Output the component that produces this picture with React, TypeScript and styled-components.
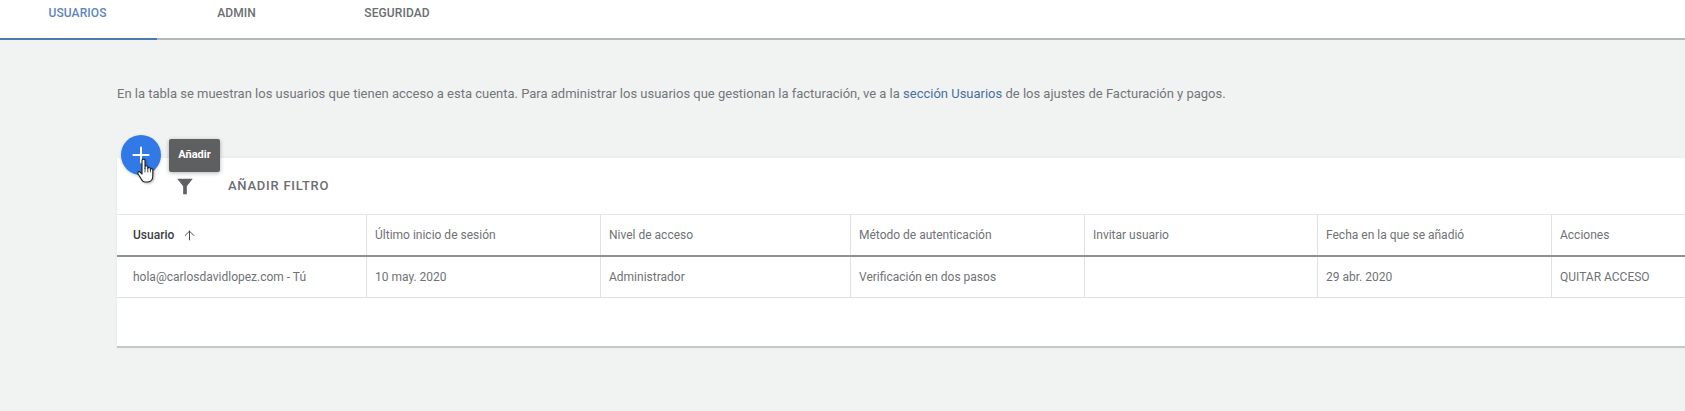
import React from 'react';
import styled, { createGlobalStyle } from 'styled-components';
import { ArrowUp, Plus } from 'lucide-react';

const GlobalStyle = createGlobalStyle`
    html, body {
        margin: 0;
        padding: 0;
        height: 100%;
        overflow: hidden;
        background: #f1f3f3;
        font-family: Roboto, "Liberation Sans", sans-serif;
    }
`;

const Page = styled.div`
    width: 1685px;
    height: 411px;
    overflow: hidden;
    background: #f1f3f3;
`;

const TabBar = styled.nav`
    display: flex;
    height: 38px;
    background: #fff;
    border-bottom: 2px solid #b4b6b8;
`;

const Tab = styled.div<{ $active?: boolean; $width: number }>`
    width: ${p => p.$width}px;
    height: 40px;
    box-sizing: border-box;
    padding: 6px 2px 0 0;
    line-height: 15px;
    text-align: center;
    font-size: 12px;
    font-weight: 500;
    letter-spacing: 0.1px;
    color: ${p => (p.$active ? '#5d86bd' : '#6b6e72')};
    border-bottom: 2px solid ${p => (p.$active ? '#4c79b4' : 'transparent')};
`;

const Content = styled.main`
    padding: 44px 0 0 117px;
`;

const Intro = styled.p`
    margin: 0;
    font-size: 13px;
    line-height: 20px;
    color: #73767a;
    letter-spacing: -0.006px;
    white-space: nowrap;
    & a {
        color: #48709f;
    }
`;

const Card = styled.section`
    position: relative;
    margin-top: 54px;
    height: 188px;
    background: #fff;
    border-bottom: 2px solid #c4c6c7;
    box-shadow: 0 0 3px rgba(0, 0, 0, 0.06);
`;

const AddButton = styled.div`
    position: absolute;
    left: 4px;
    top: -23px;
    width: 40px;
    height: 40px;
    border-radius: 50%;
    background: #3079e6;
    color: #fff;
    display: flex;
    align-items: center;
    justify-content: center;
    box-shadow: 0 1px 3px rgba(0, 0, 0, 0.18);
`;

const Tooltip = styled.div`
    position: absolute;
    left: 52px;
    top: -19px;
    width: 51px;
    height: 33px;
    border-radius: 2px;
    background: #5e5f60;
    color: #fff;
    font-size: 11px;
    font-weight: 700;
    line-height: 32px;
    text-align: center;
    box-shadow: 0 1px 4px rgba(0, 0, 0, 0.3);
`;

const HandCursor = styled.div`
    position: absolute;
    left: 20px;
    top: 0;
    line-height: 0;
    filter: drop-shadow(1px 1px 1px rgba(0, 0, 0, 0.3));
`;

const FilterBar = styled.div`
    display: flex;
    align-items: center;
    height: 56px;
    box-sizing: border-box;
    padding: 0 0 1px 57px;
`;

const FilterLabel = styled.span`
    margin-left: 32px;
    font-size: 13px;
    font-weight: 500;
    letter-spacing: 0.75px;
    color: #6b6e72;
`;

const Row = styled.div<{ $head?: boolean }>`
    display: grid;
    grid-template-columns: 249px 234px 250px 234px 233px 234px 1fr;
    height: ${p => (p.$head ? 43 : 41)}px;
    box-sizing: border-box;
    border-top: ${p => (p.$head ? '1px solid #e6e7e8' : 'none')};
    border-bottom: ${p => (p.$head ? '2px solid #8e9092' : '1px solid #e0e1e2')};
`;

const Cell = styled.div<{ $strong?: boolean; $first?: boolean }>`
    display: flex;
    align-items: center;
    gap: 8px;
    padding-left: ${p => (p.$first ? 16 : 8)}px;
    font-size: 12px;
    white-space: nowrap;
    color: ${p => (p.$strong ? '#3d4043' : '#6f7276')};
    font-weight: ${p => (p.$strong ? 500 : 400)};
    & + & {
        border-left: 1px solid #e0e1e2;
    }
`;

const FunnelIcon = () => (
    <svg width="22" height="22" viewBox="0 0 24 24" fill="#5f6164">
        <path d="M3.5 4h17l-6.5 8.4V21h-4v-8.6z" />
    </svg>
);

const HandIcon = () => (
    <svg width="17" height="25" viewBox="0 0 17 25" fill="#fff" stroke="#222" strokeWidth="1.1" strokeLinejoin="round" strokeLinecap="round">
        <path d="M5 14V2.6a1.5 1.5 0 0 1 3 0V10.5V9.2a1.4 1.4 0 0 1 2.8 0v1.6a1.3 1.3 0 0 1 2.6 0v1a1.2 1.2 0 0 1 2.4 0V18c0 3.4-2 6-5 6H8.2c-2 0-3-1-4-3L1 15.8c-.8-1.5 1-2.7 2.1-1.7L5 16z" />
        <path d="M8 10.5V14M10.8 10.8V14M13.4 11.8V14" fill="none" strokeWidth="0.8" />
    </svg>
);

const headers = [
    'Último inicio de sesión',
    'Nivel de acceso',
    'Método de autenticación',
    'Invitar usuario',
    'Fecha en la que se añadió',
    'Acciones',
];

const values = ['10 may. 2020', 'Administrador', 'Verificación en dos pasos', '', '29 abr. 2020', 'QUITAR ACCESO'];

const App = () => {
    return (
        <Page>
            <GlobalStyle />
            <TabBar>
                <Tab $active $width={157}>USUARIOS</Tab>
                <Tab $width={161}>ADMIN</Tab>
                <Tab $width={160}>SEGURIDAD</Tab>
            </TabBar>
            <Content>
                <Intro>
                    En la tabla se muestran los usuarios que tienen acceso a esta cuenta. Para administrar los usuarios que gestionan la facturación, ve a la <a>sección Usuarios</a> de los ajustes de Facturación y pagos.
                </Intro>
                <Card>
                    <FilterBar>
                        <FunnelIcon />
                        <FilterLabel>AÑADIR FILTRO</FilterLabel>
                    </FilterBar>
                    <Row $head>
                        <Cell $strong $first>
                            Usuario
                            <ArrowUp size={15} strokeWidth={1.5} />
                        </Cell>
                        {headers.map(h => <Cell key={h}>{h}</Cell>)}
                    </Row>
                    <Row>
                        <Cell $first>hola@carlosdavidlopez.com - Tú</Cell>
                        {values.map((v, i) => <Cell key={i}>{v}</Cell>)}
                    </Row>
                    <AddButton>
                        <Plus size={26} strokeWidth={1.8} />
                    </AddButton>
                    <Tooltip>Añadir</Tooltip>
                    <HandCursor>
                        <HandIcon />
                    </HandCursor>
                </Card>
            </Content>
        </Page>
    );
};

export default App;
